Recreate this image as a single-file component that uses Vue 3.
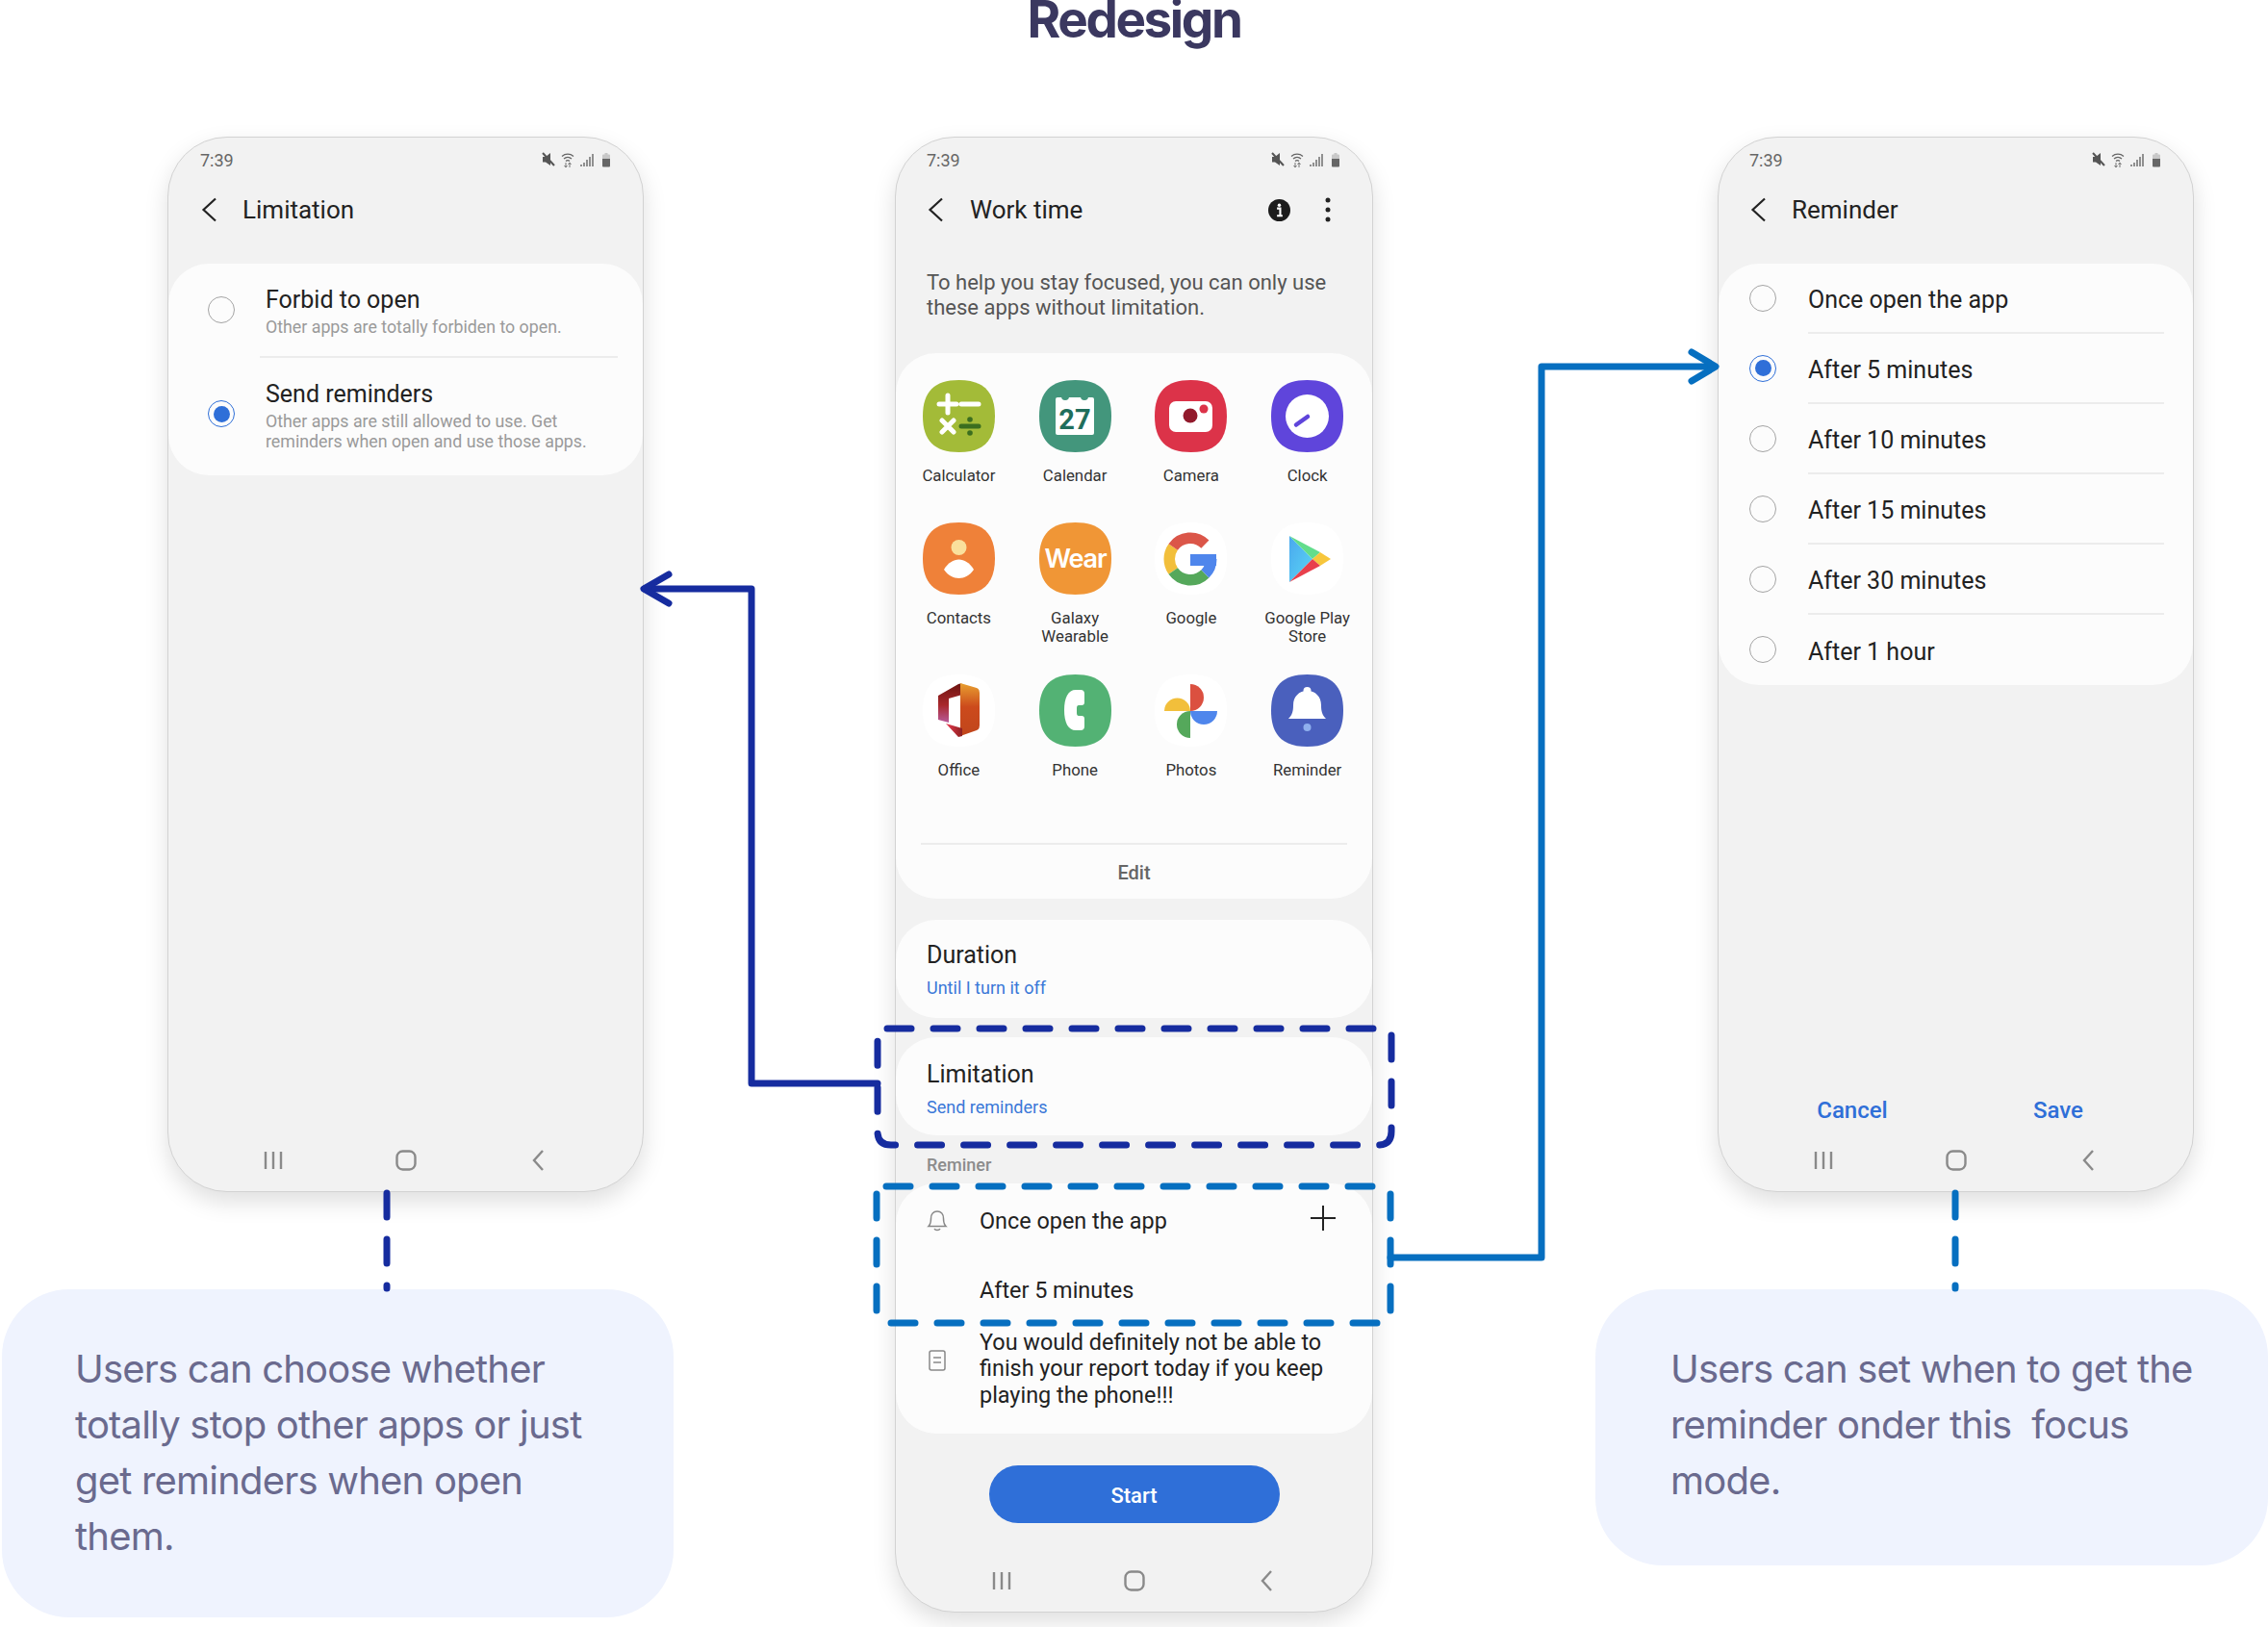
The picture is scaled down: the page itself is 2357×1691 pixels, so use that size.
<script setup>
const apps = [
  { id: "calc", lines: ["Calculator"], bg: "#a3bb38" },
  { id: "cal", lines: ["Calendar"], bg: "#43967c" },
  { id: "cam", lines: ["Camera"], bg: "#dc3349" },
  { id: "clock", lines: ["Clock"], bg: "#5f45db" },
  { id: "contacts", lines: ["Contacts"], bg: "#ef8139" },
  { id: "wear", lines: ["Galaxy", "Wearable"], bg: "#f09636" },
  { id: "google", lines: ["Google"], bg: "#ffffff" },
  { id: "play", lines: ["Google Play", "Store"], bg: "#ffffff" },
  { id: "office", lines: ["Office"], bg: "#ffffff" },
  { id: "phone", lines: ["Phone"], bg: "#53b274" },
  { id: "photos", lines: ["Photos"], bg: "#ffffff" },
  { id: "reminder", lines: ["Reminder"], bg: "#4a60bd" },
];

const reminderOptions = [
  { label: "Once open the app", on: false },
  { label: "After 5 minutes", on: true },
  { label: "After 10 minutes", on: false },
  { label: "After 15 minutes", on: false },
  { label: "After 30 minutes", on: false },
  { label: "After 1 hour", on: false },
];

const squircle =
  "M37.5 0C63 0 75 12 75 37.5C75 63 63 75 37.5 75C12 75 0 63 0 37.5C0 12 12 0 37.5 0Z";
</script>

<template>
  <div class="board">
    <!-- shared icons -->
    <svg class="sprite" width="0" height="0" aria-hidden="true">
      <defs>
        <linearGradient id="play-blue" x1="0" y1="0" x2="1" y2="1">
          <stop offset="0" stop-color="#4aa8ee" />
          <stop offset="1" stop-color="#5ad6f5" />
        </linearGradient>
        <linearGradient id="office-right" x1="0" y1="0" x2="0" y2="1">
          <stop offset="0" stop-color="#e8a030" />
          <stop offset="0.45" stop-color="#cc4a1c" />
          <stop offset="1" stop-color="#c0461c" />
        </linearGradient>
        <linearGradient id="office-left" x1="0" y1="0" x2="0" y2="1">
          <stop offset="0" stop-color="#6e1410" />
          <stop offset="0.55" stop-color="#a8282c" />
          <stop offset="1" stop-color="#b85a9a" />
        </linearGradient>
        <linearGradient id="office-bottom" x1="0" y1="0" x2="1" y2="0">
          <stop offset="0" stop-color="#ea3a50" />
          <stop offset="1" stop-color="#8c2020" />
        </linearGradient>
      </defs>
      <symbol id="status-icons" viewBox="0 0 73 16">
        <path d="M1 5h3l5-4v13L4 10.500H1z" fill="#555" />
        <path d="M1 1l12 13" stroke="#555" stroke-width="2" />
        <path d="M21 4.500a9 9 0 0 1 12 0M23 7a6 6 0 0 1 8 0M25 9.500a3 3 0 0 1 4 0" fill="none" stroke="#666" stroke-width="1.300" />
        <path d="M25 11v5M23.500 14l1.500 2 1.500-2M29 16v-5M27.500 13l1.500-2 1.500 2" fill="none" stroke="#777" stroke-width="1" />
        <path d="M41 15v-2M44 15v-4M47 15V8M50 15V5M53 15V2" stroke="#777" stroke-width="1.600" />
        <path d="M63 3.500q0-1 1-1h1.500V1h3v1.500H70q1 0 1 1V7h-8z" fill="#c8c8c8" />
        <path d="M63 7h8v7.500q0 1-1 1h-6q-1 0-1-1z" fill="#666" />
      </symbol>
      <symbol id="nav-recent" viewBox="0 0 22 22">
        <path d="M3 2v18M11 2v18M19 2v18" stroke="#8a8a8a" stroke-width="2.400" fill="none" />
      </symbol>
      <symbol id="nav-home" viewBox="0 0 22 22">
        <rect x="1.500" y="1.500" width="19" height="19" rx="6" stroke="#8a8a8a" stroke-width="2.400" fill="none" />
      </symbol>
      <symbol id="nav-back" viewBox="0 0 22 22">
        <path d="M15 1 6 11l9 10" stroke="#8a8a8a" stroke-width="2.400" fill="none" />
      </symbol>
      <symbol id="back" viewBox="0 0 18 26">
        <path d="M15 1.500 2.500 13 15 24.500" stroke="#222" stroke-width="2.200" fill="none" />
      </symbol>
    </svg>

    <h1 class="board-title">Redesign</h1>

    <div class="columns">
      <!-- Limitation screen -->
      <section class="col col-left">
        <div class="phone phone-short">
          <div class="status">
            <span>7:39</span>
            <svg class="status-icons"><use href="#status-icons" /></svg>
          </div>
          <div class="appbar">
            <svg class="back"><use href="#back" /></svg>
            <span class="appbar-title">Limitation</span>
          </div>
          <div class="card lim-card">
            <div class="lim-row first">
              <span class="radio"></span>
              <div>
                <div class="item-title">Forbid to open</div>
                <div class="item-sub">Other apps are totally forbiden to open.</div>
              </div>
            </div>
            <div class="lim-divider"></div>
            <div class="lim-row">
              <span class="radio on"></span>
              <div>
                <div class="item-title">Send reminders</div>
                <div class="item-sub">Other apps are still allowed to use. Get<br />reminders when open and use those apps.</div>
              </div>
            </div>
          </div>
          <div class="nav">
            <svg><use href="#nav-recent" /></svg>
            <svg><use href="#nav-home" /></svg>
            <svg><use href="#nav-back" /></svg>
          </div>
        </div>
        <div class="callout callout-left">
          Users can choose whether<br />totally stop other apps or just<br />get reminders when open<br />them.
        </div>
      </section>

      <!-- Work time screen -->
      <section class="col col-mid">
        <div class="phone phone-tall">
          <div class="status">
            <span>7:39</span>
            <svg class="status-icons"><use href="#status-icons" /></svg>
          </div>
          <div class="appbar">
            <svg class="back"><use href="#back" /></svg>
            <span class="appbar-title">Work time</span>
            <svg class="info" viewBox="0 0 24 24">
              <circle cx="12" cy="12" r="12" fill="#1c1c1c" />
              <circle cx="12" cy="6.500" r="1.800" fill="#fff" />
              <path d="M9.500 10h3.500v8M9.500 18h6" stroke="#fff" stroke-width="2.200" fill="none" />
            </svg>
            <svg class="more" viewBox="0 0 6 26">
              <circle cx="3" cy="3" r="2.500" fill="#222" />
              <circle cx="3" cy="13" r="2.500" fill="#222" />
              <circle cx="3" cy="23" r="2.500" fill="#222" />
            </svg>
          </div>
          <p class="intro">To help you stay focused, you can only use<br />these apps without limitation.</p>

          <div class="card apps-card">
            <div class="apps">
              <div v-for="app in apps" :key="app.id" class="app">
                <svg class="app-icon" viewBox="0 0 75 75">
                  <path :d="squircle" :fill="app.bg" />
                  <g v-if="app.id === 'calc'">
                    <path d="M26 16v18M17 25h18M40 25h18M20 42l12 12M32 42 20 54" stroke="#fff" stroke-width="5" stroke-linecap="round" fill="none" />
                    <path d="M40 48h18" stroke="#3b6e1f" stroke-width="5" stroke-linecap="round" />
                    <circle cx="49" cy="41" r="2.800" fill="#3b6e1f" />
                    <circle cx="49" cy="55" r="2.800" fill="#3b6e1f" />
                  </g>
                  <g v-else-if="app.id === 'cal'">
                    <rect x="17" y="18" width="40" height="39" rx="2" fill="#fff" />
                    <circle cx="27" cy="17" r="4" fill="#43967c" />
                    <circle cx="47" cy="17" r="4" fill="#43967c" />
                    <text x="37" y="51" text-anchor="middle" class="cal-num">27</text>
                  </g>
                  <g v-else-if="app.id === 'cam'">
                    <rect x="15" y="22" width="45" height="32" rx="7" fill="#fff" />
                    <circle cx="37" cy="37" r="7.500" fill="#921a2c" />
                    <circle cx="51" cy="30" r="4.500" fill="#dc3349" />
                  </g>
                  <g v-else-if="app.id === 'clock'">
                    <circle cx="37.500" cy="37.500" r="22.500" fill="#fff" />
                    <path d="M26 46.500 38 38" stroke="#5f45db" stroke-width="4.500" stroke-linecap="round" />
                  </g>
                  <g v-else-if="app.id === 'contacts'">
                    <circle cx="37.500" cy="26" r="8" fill="#fae09c" />
                    <path d="M22 49C26 42 32 38.500 37.500 38.500C43 38.500 49 42 53 49C49 55 43 58 37.500 58C32 58 26 55 22 49Z" fill="#fff" />
                  </g>
                  <text v-else-if="app.id === 'wear'" x="37.500" y="47" text-anchor="middle" class="wear-text">Wear</text>
                  <g v-else-if="app.id === 'google'" fill="none" stroke-width="11.500">
                    <path d="M19.200 25.500A21.750 21.750 0 0 0 19.200 50.500" stroke="#f2bf3b" />
                    <path d="M19.200 50.500A21.750 21.750 0 0 0 52.400 53.400" stroke="#55a85b" />
                    <path d="M19.200 25.500A21.750 21.750 0 0 1 52.400 22.600" stroke="#db5649" />
                    <path d="M52.400 53.400A21.750 21.750 0 0 0 58.750 38" stroke="#4f86ec" />
                    <path d="M37 39h27" stroke="#4f86ec" stroke-width="12" />
                  </g>
                  <g v-else-if="app.id === 'play'">
                    <path d="M19 14 43 38 19 62Z" fill="url(#play-blue)" />
                    <path d="M19 14 51 31 43 38Z" fill="#62dd8c" />
                    <path d="M51 31 62 38 51 45 43 38Z" fill="#f7c63c" />
                    <path d="M19 62 43 38 51 45Z" fill="#e8404c" />
                  </g>
                  <g v-else-if="app.id === 'office'">
                    <path d="M16 22 37 10Q39 9 41 10V21L27 25V50L16 47Z" fill="url(#office-left)" />
                    <path d="M39 9 56 14Q59 15 59 19V53Q59 57 56 58L39 64Z" fill="url(#office-right)" />
                    <path d="M24 51 41 56V64L37 65Z" fill="url(#office-bottom)" />
                  </g>
                  <path
                    v-else-if="app.id === 'phone'"
                    d="M38 16H43Q47 16 47 20V29Q47 32 44 32H41Q39 32 39 35V40Q39 43 41 43H44Q47 43 47 46V54Q47 58 43 58H38C30 58 26 50 26 37C26 24 30 16 38 16Z"
                    fill="#fff"
                  />
                  <g v-else-if="app.id === 'photos'">
                    <path d="M37 10A14 14 0 0 1 37 38Z" fill="#db5040" />
                    <path d="M10 38A13.500 13.500 0 0 1 37 38Z" fill="#f2bf3b" />
                    <path d="M37 38A14 14 0 0 0 37 66Z" fill="#55a85b" />
                    <path d="M37 38H65A14 14 0 0 1 37 38Z" fill="#4f86ec" />
                  </g>
                  <g v-else-if="app.id === 'reminder'">
                    <circle cx="37.500" cy="17" r="4" fill="#fff" />
                    <path d="M18 46C22 42 23 38 23 32C23 23 29 17 37.500 17C46 17 52 23 52 32C52 38 53 42 57 46Z" fill="#fff" />
                    <circle cx="37.500" cy="55" r="4" fill="#8fb0ee" />
                  </g>
                </svg>
                <div class="app-label">
                  <div v-for="line in app.lines" :key="line">{{ line }}</div>
                </div>
              </div>
            </div>
            <div class="edit">Edit</div>
          </div>

          <div class="card setting duration">
            <div class="item-title">Duration</div>
            <div class="setting-value">Until I turn it off</div>
          </div>
          <div class="card setting limitation">
            <div class="item-title">Limitation</div>
            <div class="setting-value">Send reminders</div>
          </div>

          <div class="section-label">Reminer</div>
          <div class="card reminder-card">
            <div class="rem-row">
              <svg class="rem-icon bell" viewBox="0 0 22 24">
                <path d="M2 18.500c2-2 2.500-4 2.500-8C4.500 6 7 3 11 3s6.500 3 6.500 7.500c0 4 .5 6 2.500 8zM8 21c1 2 5 2 6 0" fill="none" stroke="#888" stroke-width="1.500" />
              </svg>
              <span class="rem-text">Once open the app</span>
              <svg class="rem-plus" viewBox="0 0 26 26">
                <path d="M13 0v26M0 13h26" stroke="#222" stroke-width="2" />
              </svg>
            </div>
            <div class="rem-row second">
              <span class="rem-icon"></span>
              <span class="rem-text">After 5 minutes</span>
            </div>
            <div class="rem-row note">
              <svg class="rem-icon doc" viewBox="0 0 22 24">
                <rect x="3" y="2" width="16" height="20" rx="2" fill="none" stroke="#888" stroke-width="1.500" />
                <path d="M7 9h8M7 14h8" stroke="#888" stroke-width="1.500" />
              </svg>
              <span class="rem-text">You would definitely not be able to<br />finish your report today if you keep<br />playing the phone!!!</span>
            </div>
          </div>

          <div class="start">Start</div>
          <div class="nav">
            <svg><use href="#nav-recent" /></svg>
            <svg><use href="#nav-home" /></svg>
            <svg><use href="#nav-back" /></svg>
          </div>
        </div>
      </section>

      <!-- Reminder screen -->
      <section class="col col-right">
        <div class="phone phone-short">
          <div class="status">
            <span>7:39</span>
            <svg class="status-icons"><use href="#status-icons" /></svg>
          </div>
          <div class="appbar">
            <svg class="back"><use href="#back" /></svg>
            <span class="appbar-title">Reminder</span>
          </div>
          <div class="card opt-card">
            <div v-for="opt in reminderOptions" :key="opt.label" class="opt">
              <span class="radio" :class="{ on: opt.on }"></span>
              <span class="opt-label">{{ opt.label }}</span>
            </div>
          </div>
          <div class="actions">
            <span>Cancel</span>
            <span>Save</span>
          </div>
          <div class="nav nav-after-actions">
            <svg><use href="#nav-recent" /></svg>
            <svg><use href="#nav-home" /></svg>
            <svg><use href="#nav-back" /></svg>
          </div>
        </div>
        <div class="callout callout-right">
          Users can set when to get the<br />reminder onder this &nbsp;focus<br />mode.
        </div>
      </section>
    </div>

    <!-- connectors drawn over the screens -->
    <svg class="links" viewBox="0 0 2357 1691">
      <g class="dark">
        <path class="dash" d="M402 1240V1339" />
        <path class="dash" d="M922 1069H1430" />
        <path class="dash" d="M1446 1076V1176Q1446 1190 1432 1190H926Q912 1190 912 1176V1082" />
        <path d="M912 1126H781V612H670" />
        <path d="M695 597 669 612 695 627" />
      </g>
      <g class="light">
        <path class="dash" d="M2032 1240V1339" />
        <path class="dash" d="M921 1233H1428" />
        <path class="dash" d="M926 1375H1436" />
        <path class="dash" d="M911 1241V1366" />
        <path class="dash" d="M1445 1241V1366" />
        <path d="M1445 1307H1602V381H1780" />
        <path d="M1758 366 1783 381 1758 396" />
      </g>
    </svg>
  </div>
</template>

<style scoped>
* {
  box-sizing: border-box;
}

.board {
  position: relative;
  width: 2357px;
  height: 1691px;
  overflow: hidden;
  background: #fff;
  font-family: Roboto, sans-serif;
  color: #222;
}

.sprite {
  position: absolute;
}

.board-title {
  height: 142px;
  margin: 0;
  text-align: center;
  font-family: Inter, sans-serif;
  font-size: 53px;
  font-weight: 700;
  line-height: 40px;
  letter-spacing: -2.4px;
  color: #3b3860;
}

.columns {
  display: grid;
  grid-template-columns: 700px 1fr 699px;
}

.col-left {
  padding-left: 2px;
}

.col-left .phone {
  margin-left: 172px;
}

.col-left .status {
  padding-left: 33px;
}

.col-left .appbar {
  padding-left: 34px;
}

.col-mid .phone {
  margin-left: 230px;
}

.col-mid .back {
  margin-right: 26px;
}

.col-right .phone {
  margin-left: 127px;
}

/* phone frame */
.phone {
  display: flex;
  flex-direction: column;
  background: #f2f2f2;
  border: 1px solid #d2d2d2;
  border-radius: 62px;
  box-shadow: 0 10px 24px rgba(0, 0, 0, 0.13);
}

.phone-short {
  width: 495px;
  height: 1097px;
}

.phone-tall {
  width: 497px;
  height: 1534px;
}

.status {
  display: flex;
  justify-content: space-between;
  align-items: center;
  height: 46px;
  padding: 0 32px;
  font-size: 18px;
  color: #666;
}

.status-icons {
  width: 73px;
  height: 16px;
}

.appbar {
  display: flex;
  align-items: center;
  height: 58px;
  padding-left: 33px;
}

.back {
  width: 18px;
  height: 26px;
  margin-right: 25px;
}

.appbar-title {
  flex: 1;
  font-size: 26px;
}

.info {
  width: 23px;
  height: 23px;
}

.more {
  width: 6px;
  height: 26px;
  margin: 0 43px 0 36px;
}

.card {
  background: #fcfcfc;
  border-radius: 42px;
}

.item-title {
  font-size: 25px;
  line-height: 30px;
  color: #222;
}

.item-sub {
  margin-top: 2px;
  font-size: 17.800px;
  line-height: 21px;
  color: #9a9a9a;
}

.radio {
  flex: none;
  position: relative;
  width: 28px;
  height: 28px;
  border: 1.5px solid #a4a4a4;
  border-radius: 50%;
}

.radio.on {
  border-color: #2f6fd8;
}

.radio.on::after {
  content: "";
  position: absolute;
  inset: 4.5px;
  border-radius: 50%;
  background: #2f6fd8;
}

/* limitation list */
.lim-card {
  margin-top: 27px;
  height: 220px;
}

.lim-row {
  display: flex;
  align-items: center;
  gap: 32px;
  padding: 23px 26px 25px 41px;
}

.lim-row .radio {
  margin-top: -4px;
}

.lim-row.first {
  height: 96px;
  padding-bottom: 20px;
}

.lim-divider {
  height: 2px;
  margin: 0 26px 0 95px;
  background: #ececec;
}

/* work time */
.intro {
  margin: 34px 0 0;
  padding-left: 32px;
  font-size: 22px;
  line-height: 26px;
  color: #555;
}

.apps-card {
  margin-top: 34px;
  padding-top: 28px;
}

.apps {
  display: grid;
  grid-template-columns: repeat(4, 1fr);
  grid-template-rows: 148px 158px 175px;
  padding: 0 7px 0 5px;
}

.app {
  display: flex;
  flex-direction: column;
  align-items: center;
}

.app-icon {
  width: 75px;
  height: 75px;
}

.app-label {
  margin-top: 15px;
  font-size: 16.800px;
  line-height: 19px;
  text-align: center;
  white-space: nowrap;
  color: #333;
}

.cal-num {
  font-family: Roboto, sans-serif;
  font-size: 29px;
  font-weight: 700;
  fill: #1f6e5c;
}

.wear-text {
  font-family: Inter, sans-serif;
  font-size: 27px;
  font-weight: 600;
  letter-spacing: -1.2px;
  fill: #fff;
}

.edit {
  display: flex;
  justify-content: center;
  align-items: center;
  height: 58px;
  margin: 0 26px;
  padding-top: 1px;
  border-top: 2px solid #ececec;
  font-size: 20px;
  font-weight: 500;
  color: #666;
}

.setting {
  height: 102px;
  padding: 22px 0 0 32px;
}

.duration {
  margin-top: 22px;
}

.limitation {
  margin-top: 20px;
  padding-top: 24px;
}

.setting-value {
  margin-top: 7px;
  font-size: 18px;
  line-height: 24px;
  color: #3a78d8;
}

.section-label {
  height: 22px;
  margin-top: 20px;
  padding-left: 32px;
  font-size: 18px;
  font-weight: 500;
  line-height: 22px;
  color: #8c8c8c;
}

.reminder-card {
  height: 260px;
  margin-top: 8px;
  padding: 26px 38px 0 32px;
}

.rem-row {
  display: flex;
  align-items: center;
}

.rem-row.second {
  margin-top: 43.500px;
}

.rem-row.note {
  margin-top: 26.500px;
}

.rem-icon {
  flex: none;
  width: 22px;
  height: 24px;
  margin-right: 33px;
}

.rem-icon.bell {
  margin-bottom: 4px;
}

.rem-icon.doc {
  margin-bottom: 17px;
}

.rem-text {
  flex: 1;
  font-size: 23.400px;
  line-height: 27.500px;
}

.rem-plus {
  align-self: flex-start;
  width: 26px;
  height: 26px;
  margin-top: -3px;
}

.start {
  display: flex;
  justify-content: center;
  align-items: center;
  width: 302px;
  height: 60px;
  margin: 33px auto 0;
  padding-top: 2px;
  border-radius: 30px;
  background: #2f6fd8;
  font-size: 22px;
  font-weight: 500;
  color: #fff;
}

/* reminder options */
.opt-card {
  margin-top: 27px;
  height: 438px;
}

.opt {
  display: flex;
  height: 73px;
  padding: 0 30px 0 32px;
}

.opt .radio {
  align-self: center;
  margin: -2px 33px 0 0;
}

.opt-label {
  flex: 1;
  display: flex;
  align-items: center;
  padding-top: 3px;
  border-bottom: 2px solid #ececec;
  font-size: 25px;
}

.opt:last-child .opt-label {
  border-bottom: 0;
}

.actions {
  display: flex;
  margin-top: auto;
  height: 34px;
  font-size: 24px;
  font-weight: 500;
  line-height: 30px;
  color: #2f6fd8;
}

.actions span {
  width: 214px;
  text-align: center;
}

.actions span:first-child {
  margin-left: 32px;
}

/* soft keys */
.nav {
  display: flex;
  flex: none;
  justify-content: center;
  align-items: center;
  height: 65px;
  margin-top: auto;
}

.nav-after-actions {
  margin-top: 0;
}

.nav svg {
  width: 22px;
  height: 22px;
  margin: 0 58px;
}

/* notes */
.callout {
  width: 698px;
  margin-top: 101px;
  padding: 54px 0 0 76px;
  border-radius: 70px;
  background: #eff3fe;
  font-family: Inter, sans-serif;
  font-size: 40px;
  line-height: 58px;
  letter-spacing: -0.800px;
  color: #6a6a8e;
}

.callout-left {
  height: 341px;
}

.callout-right {
  height: 287px;
  padding-left: 78px;
  width: 699px;
}

/* connectors */
.links {
  position: absolute;
  inset: 0;
  width: 2357px;
  height: 1691px;
  pointer-events: none;
}

.links path {
  fill: none;
  stroke-width: 7;
  stroke-linecap: round;
  stroke-linejoin: round;
}

.links .dash {
  stroke-dasharray: 25 23;
}

.dark path {
  stroke: #162c9f;
}

.light path {
  stroke: #066fc0;
}
</style>

<style>
html,
body {
  margin: 0;
  background: #fff;
}
</style>
